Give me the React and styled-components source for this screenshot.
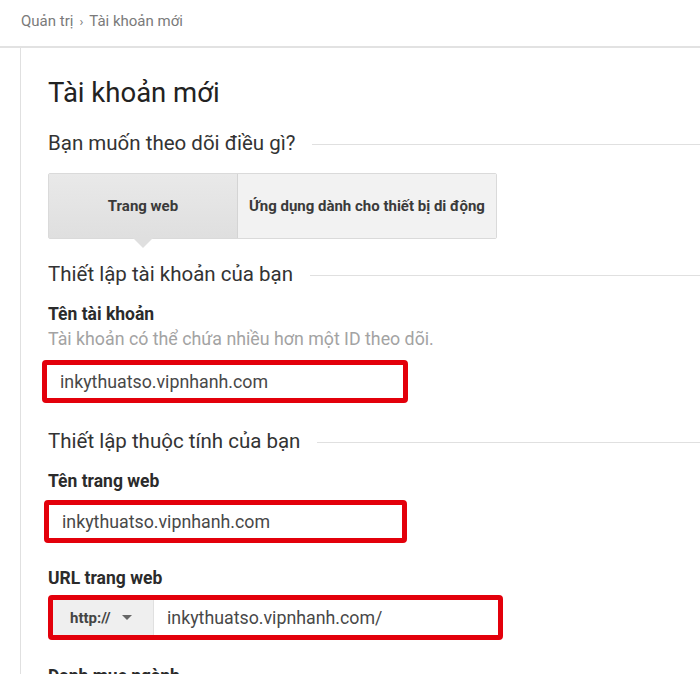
import React from "react"
import styled, { createGlobalStyle } from "styled-components"

const GlobalStyle = createGlobalStyle`
  body {
    margin: 0;
    background: #fff;
    font-family: Roboto, "Noto Sans", Arial, sans-serif;
    color: #333;
  }
`

const App = () => {
  return (
    <Page>
      <GlobalStyle />
      <Breadcrumb>
        Quản trị <span className="sep">›</span> Tài khoản mới
      </Breadcrumb>
      <Panel>
        <Title>Tài khoản mới</Title>
        <SectionHeading top="22px">
          <span>Bạn muốn theo dõi điều gì?</span>
        </SectionHeading>
        <Tabs>
          <Tab active>Trang web</Tab>
          <Tab>Ứng dụng dành cho thiết bị di động</Tab>
        </Tabs>
        <SectionHeading top="23px">
          <span>Thiết lập tài khoản của bạn</span>
        </SectionHeading>
        <Label top="18px">Tên tài khoản</Label>
        <Help>Tài khoản có thể chứa nhiều hơn một ID theo dõi.</Help>
        <Highlight left="-6px" width="366px" height="43px" top="11px">
          <TextValue>inkythuatso.vipnhanh.com</TextValue>
        </Highlight>
        <SectionHeading top="26px">
          <span>Thiết lập thuộc tính của bạn</span>
        </SectionHeading>
        <Label top="18px">Tên trang web</Label>
        <Highlight left="-4px" width="363px" height="43px" top="9px">
          <TextValue>inkythuatso.vipnhanh.com</TextValue>
        </Highlight>
        <Label top="25px">URL trang web</Label>
        <Highlight left="0" width="455px" height="45px" top="7px">
          <Protocol>
            http://
            <Caret />
          </Protocol>
          <TextValue>inkythuatso.vipnhanh.com/</TextValue>
        </Highlight>
        <Label top="26px">Danh mục ngành</Label>
      </Panel>
    </Page>
  )
}

const Page = styled.div`
  display: flex;
  flex-direction: column;
  height: 100vh;
  overflow: hidden;
`

const Breadcrumb = styled.div`
  flex: none;
  height: 48px;
  display: flex;
  align-items: center;
  padding: 0 0 4px 21px;
  font-size: 15px;
  color: #7a7a7a;
  border-bottom: 2px solid #e2e2e2;
  box-sizing: border-box;
  .sep {
    margin: 0 6px;
    font-size: 13px;
  }
`

const Panel = styled.div`
  flex: 1;
  margin-left: 20px;
  border-left: 1px solid #e0e0e0;
  padding: 29px 0 0 27px;
  box-sizing: border-box;
`

const Title = styled.h1`
  margin: 0;
  font-size: 27.5px;
  font-weight: 400;
  line-height: 32px;
  color: #222;
`

const SectionHeading = styled.div`
  display: flex;
  align-items: center;
  margin-top: ${(p) => p.top};
  font-size: 20.5px;
  line-height: 24px;
  color: #333;
  &::after {
    content: "";
    flex: 1;
    height: 1px;
    background: #e0e0e0;
    margin-left: 17px;
    margin-top: 3px;
  }
`

const Tabs = styled.div`
  display: flex;
  width: 449px;
  height: 66px;
  margin-top: 18px;
  border: 1px solid #dadada;
  border-radius: 2px;
  box-sizing: border-box;
`

const Tab = styled.div`
  position: relative;
  display: flex;
  align-items: center;
  justify-content: center;
  width: ${(p) => (p.active ? "188px" : "auto")};
  flex: ${(p) => (p.active ? "none" : "1")};
  font-size: 15px;
  font-weight: 700;
  color: #3a3a3a;
  background: ${(p) =>
    p.active ? "linear-gradient(#e9e9e9, #dfdfdf)" : "#f2f2f2"};
  border-right: ${(p) => (p.active ? "1px solid #d4d4d4" : "none")};
  &::after {
    display: ${(p) => (p.active ? "block" : "none")};
    content: "";
    position: absolute;
    left: 50%;
    bottom: -10px;
    margin-left: -10px;
    border-left: 10px solid transparent;
    border-right: 10px solid transparent;
    border-top: 10px solid #dfdfdf;
  }
`

const Label = styled.div`
  margin-top: ${(p) => p.top};
  font-size: 17.5px;
  font-weight: 700;
  line-height: 20px;
  color: #2b2b2b;
`

const Help = styled.div`
  margin-top: 5px;
  font-size: 17.8px;
  line-height: 20px;
  color: #a3a3a3;
`

const Highlight = styled.div`
  display: flex;
  align-items: stretch;
  width: ${(p) => p.width};
  height: ${(p) => p.height};
  margin-top: ${(p) => p.top};
  margin-left: ${(p) => p.left};
  border: 5px solid #e3000b;
  border-radius: 4px;
  box-sizing: border-box;
  background: #fff;
`

const TextValue = styled.div`
  display: flex;
  align-items: center;
  padding-left: 13px;
  font-size: 17.8px;
  color: #484848;
`

const Protocol = styled.div`
  display: flex;
  align-items: center;
  gap: 11px;
  width: 101px;
  padding-left: 17px;
  box-sizing: border-box;
  background: #efefef;
  border-right: 1px solid #e0e0e0;
  font-size: 15px;
  font-weight: 700;
  color: #444;
`

const Caret = styled.span`
  width: 0;
  height: 0;
  border-left: 5px solid transparent;
  border-right: 5px solid transparent;
  border-top: 5px solid #666;
`

export default App
